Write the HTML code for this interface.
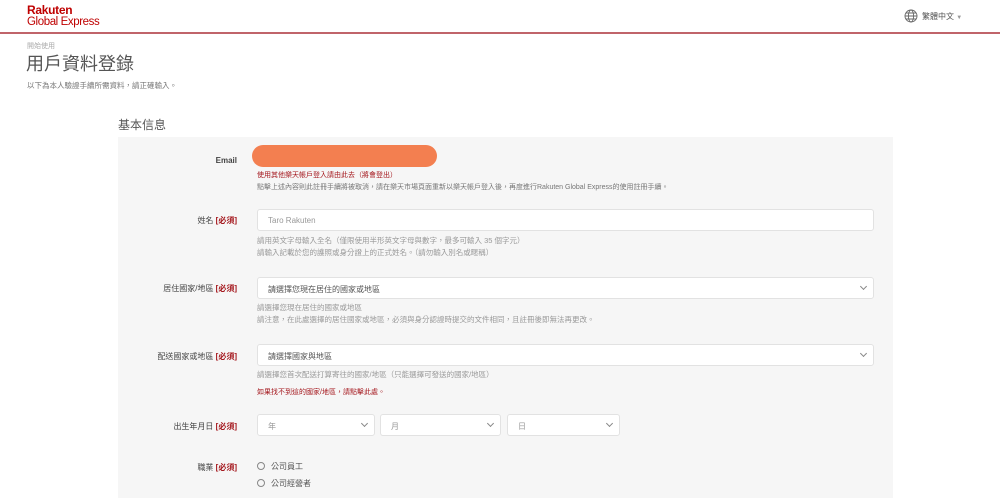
<!DOCTYPE html>
<html><head><meta charset="utf-8"><style>
*{margin:0;padding:0;box-sizing:border-box}
body{width:1000px;height:498px;overflow:hidden;background:#fff;font-family:"Liberation Sans","Noto Sans CJK TC",sans-serif;position:relative;color:#333}
.a{position:absolute;white-space:nowrap}
.hdr{position:absolute;left:0;top:32px;width:1000px;height:2px;background:#c0646a}
.panel{position:absolute;left:118px;top:137px;width:775px;height:361px;background:#f6f6f6}
.lbl{position:absolute;right:763px;font-size:8px;color:#444;text-align:right}
.lbl b{color:#a4161c;font-weight:bold}
.in{position:absolute;background:#fff;border:1px solid #e2e2e2;border-radius:3px;height:22px;font-size:8px;color:#555;padding:6px 10px}
.in.ph{color:#999}
.chev{position:absolute;right:7px;top:6px;width:5px;height:5px;border-right:1px solid #888;border-bottom:1px solid #888;transform:rotate(45deg)}
.h{position:absolute;font-size:7.5px;color:#999;line-height:12px;white-space:nowrap}
.r{color:#a4161c}
.rad{position:absolute;font-size:8px;color:#555;white-space:nowrap}
.rad i{display:inline-block;width:8px;height:8px;border:1px solid #888;border-radius:50%;vertical-align:-1px;margin-right:6px}
</style></head><body>
<div class="a" style="left:27px;top:3px;font-size:12px;font-weight:bold;color:#bf0000;letter-spacing:-0.3px">Rakuten</div>
<div class="a" style="left:27px;top:16px;font-size:11.5px;color:#bf0000;letter-spacing:-0.4px">Global Express</div>
<svg class="a" style="left:904px;top:9px" width="14" height="14" viewBox="0 0 14 14" fill="none" stroke="#666" stroke-width="0.9"><circle cx="7" cy="7" r="6"/><ellipse cx="7" cy="7" rx="2.6" ry="6"/><path d="M1 7h12M2 4h10M2 10h10"/></svg>
<div class="a" style="left:922px;top:11px;font-size:8px;color:#555">繁體中文 <span style="font-size:6px;color:#999">▼</span></div>
<div class="hdr"></div>
<div class="a" style="left:27px;top:41px;font-size:7px;color:#aaa">開始使用</div>
<div class="a" style="left:26px;top:50px;font-size:18px;color:#555">用戶資料登錄</div>
<div class="a" style="left:27px;top:80px;font-size:7.5px;color:#777">以下為本人驗證手續所需資料，請正確輸入。</div>
<div class="a" style="left:118px;top:116px;font-size:12px;color:#555">基本信息</div>
<div class="panel"></div>
<div class="lbl a" style="top:156px;font-weight:bold">Email</div>
<div class="a" style="left:252px;top:145px;width:185px;height:22px;background:#f37f50;border-radius:11px"></div>
<div class="h r" style="left:257px;top:170px;font-size:7px">使用其他樂天帳戶登入請由此去（將會登出）</div>
<div class="h" style="left:257px;top:182px;font-size:7px;color:#777">點擊上述內容則此註冊手續將被取消，請在樂天市場頁面重新以樂天帳戶登入後，再度進行Rakuten Global Express的使用註冊手續。</div>
<div class="lbl a" style="top:215px">姓名 <b>[必須]</b></div>
<div class="in ph" style="left:257px;top:209px;width:617px">Taro Rakuten</div>
<div class="h" style="left:257px;top:235px">請用英文字母輸入全名（僅限使用半形英文字母與數字，最多可輸入 35 個字元）<br>請輸入記載於您的護照或身分證上的正式姓名。（請勿輸入別名或暱稱）</div>
<div class="lbl a" style="top:283px">居住國家/地區 <b>[必須]</b></div>
<div class="in" style="left:257px;top:277px;width:617px">請選擇您現在居住的國家或地區<span class="chev"></span></div>
<div class="h" style="left:257px;top:302px">請選擇您現在居住的國家或地區<br>請注意，在此處選擇的居住國家或地區，必須與身分認證時提交的文件相同，且註冊後即無法再更改。</div>
<div class="lbl a" style="top:351px">配送國家或地區 <b>[必須]</b></div>
<div class="in" style="left:257px;top:344px;width:617px">請選擇國家與地區<span class="chev"></span></div>
<div class="h" style="left:257px;top:369px">請選擇您首次配送打算寄往的國家/地區（只能選擇可發送的國家/地區）</div>
<div class="h r" style="left:257px;top:387px;font-size:7px">如果找不到這的國家/地區，請點擊此處。</div>
<div class="lbl a" style="top:421px">出生年月日 <b>[必須]</b></div>
<div class="in ph" style="left:257px;top:414px;width:118px">年<span class="chev"></span></div>
<div class="in ph" style="left:380px;top:414px;width:121px">月<span class="chev"></span></div>
<div class="in ph" style="left:507px;top:414px;width:113px">日<span class="chev"></span></div>
<div class="lbl a" style="top:462px">職業 <b>[必須]</b></div>
<div class="rad" style="left:257px;top:461px"><i></i>公司員工</div>
<div class="rad" style="left:257px;top:478px"><i></i>公司經營者</div>
</body></html>
